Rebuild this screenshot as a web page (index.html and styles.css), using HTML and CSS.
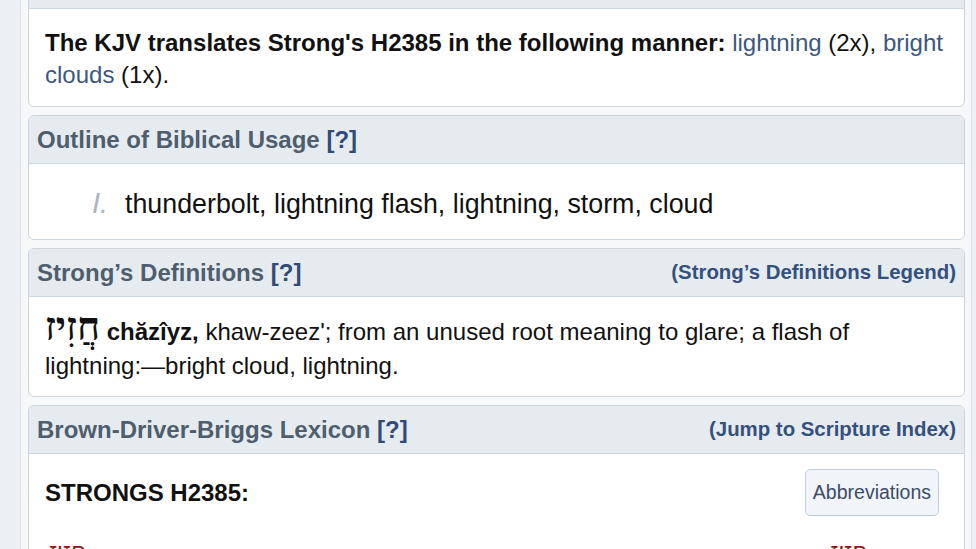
FILE: index.html
```html
<!DOCTYPE html>
<html>
<head>
<meta charset="utf-8">
<link rel="stylesheet" href="styles.css">
</head>
<body>
<div class="wrap">
  <section class="panel">
    <div class="head"><span class="title">Translation Counts <a class="q">[?]</a></span></div>
    <div class="body kjv">
      <b>The KJV translates Strong's H2385 in the following manner:</b> <a class="lnk">lightning</a> (2x), <a class="lnk">bright clouds</a> (1x).
    </div>
  </section>
  <section class="panel">
    <div class="head"><span class="title">Outline of Biblical Usage <a class="q">[?]</a></span></div>
    <div class="body outline">
      <span class="num">I.</span><span class="otext">thunderbolt, lightning flash, lightning, storm, cloud</span>
    </div>
  </section>
  <section class="panel">
    <div class="head"><span class="title">Strong’s Definitions <a class="q">[?]</a></span><a class="side">(Strong’s Definitions Legend)</a></div>
    <div class="body strongs">
      <span class="heb">חֲזִיז</span> <b>chăzîyz,</b> khaw-zeez'; from an unused root meaning to glare; a flash of lightning:—bright cloud, lightning.
    </div>
  </section>
  <section class="panel">
    <div class="head"><span class="title">Brown-Driver-Briggs Lexicon <a class="q">[?]</a></span><a class="side">(Jump to Scripture Index)</a></div>
    <div class="body bdb">
      <div class="bdbrow">
        <span class="sh">STRONGS H2385:</span>
        <button class="abbr">Abbreviations</button>
      </div>
      <div class="cut">
        <span class="red">חָזִיז</span>
        <span class="red">חָזִיז</span>
      </div>
    </div>
  </section>
</div>
</body>
</html>
```

FILE: styles.css
```css
html, body {
  margin: 0;
  padding: 0;
  height: 100%;
  overflow: hidden;
}
body {
  background: #eceff3;
  font-family: "Liberation Sans", Arial, sans-serif;
  color: #111;
}
.wrap {
  margin: -40px 0 0 20px;
  width: 937px;
  padding: 0 6px 0 7px;
  background: #f6f8fa;
  border-left: 1px solid #dbe1e6;
  border-right: 1px solid #dbe1e6;
  display: flex;
  flex-direction: column;
  gap: 8px;
  min-height: 700px;
}
.panel {
  background: #fff;
  border: 1px solid #cdd5dc;
  border-radius: 6px;
  overflow: hidden;
}
.head {
  background: #e6ebf0;
  border-bottom: 1px solid #cdd5dc;
  padding: 8px 8px;
  height: 31px;
  display: flex;
  align-items: center;
  justify-content: space-between;
}
.title {
  font-weight: bold;
  font-size: 24px;
  color: #4e5e6e;
}
.q {
  color: #2f4b7a;
}
.side {
  font-weight: bold;
  font-size: 20.4px;
  color: #34507e;
}
.body {
  padding: 16px 16px;
  font-size: 24px;
}
.kjv {
  padding: 18px 16px 15px;
  line-height: 32px;
}
.lnk {
  color: #3b5784;
}
.outline {
  padding: 18px 16px 13px 63px;
  line-height: 43px;
  display: flex;
  align-items: baseline;
}
.num {
  font-style: italic;
  font-size: 29px;
  color: #aab5bf;
  width: 33px;
}
.otext {
  font-size: 26.8px;
}
.strongs {
  line-height: 34px;
  padding: 18px 16px 13px;
}
.heb {
  font-family: "Liberation Serif", "DejaVu Serif", serif;
  font-weight: bold;
  font-size: 39px;
  line-height: 20px;
}
.bdb {
  padding-top: 15px;
}
.bdbrow {
  display: flex;
  justify-content: space-between;
  align-items: center;
}
.sh {
  font-weight: bold;
  font-size: 24px;
}
.abbr {
  font-family: "Liberation Sans", Arial, sans-serif;
  font-size: 19.5px;
  color: #3d4c66;
  background: #f1f5fa;
  border: 1px solid #bfcddb;
  border-radius: 5px;
  height: 47px;
  padding: 0 7px;
  margin-right: 9px;
}
.cut {
  display: flex;
  justify-content: space-between;
  padding: 20px 80px 0 4px;
  font-size: 24px;
  line-height: 30px;
}
.red {
  color: #8b1a1a;
  font-family: "DejaVu Sans", sans-serif;
}
```
